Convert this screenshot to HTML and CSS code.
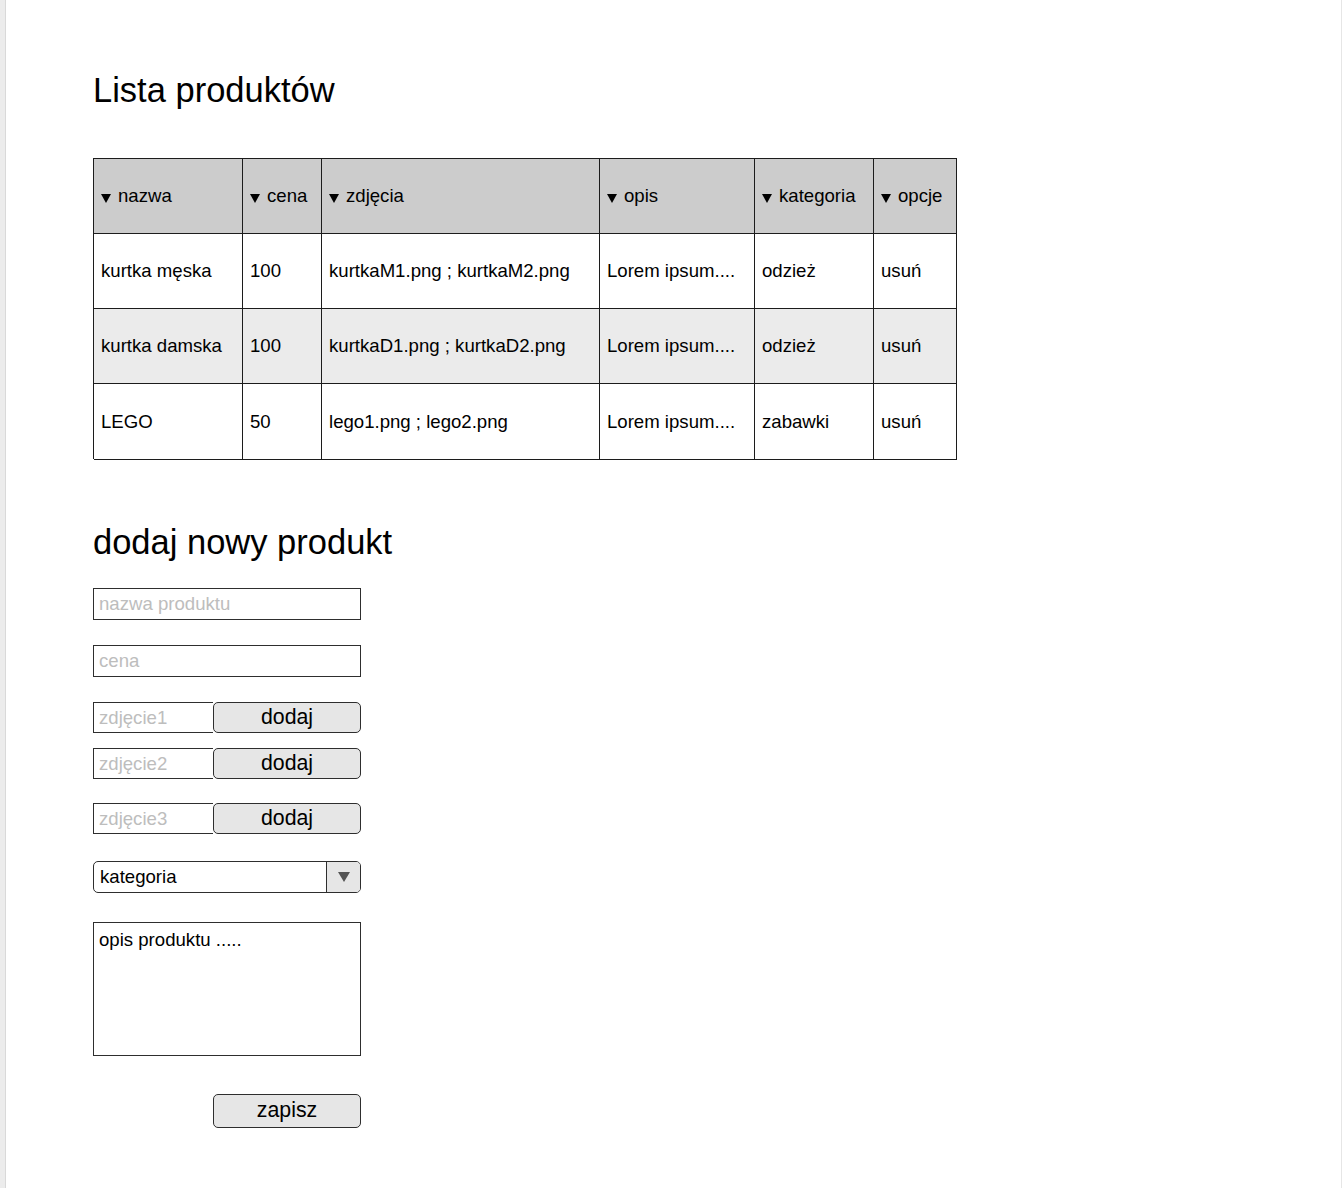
FILE: index.html
```html
<!DOCTYPE html>
<html lang="pl">
<head>
<meta charset="utf-8">
<title>Lista produktów</title>
<link rel="stylesheet" href="styles.css">
</head>
<body>
<main class="page">
  <h1 class="title">Lista produktów</h1>

  <div class="grid" role="table">
    <div class="cell head"><span class="sort"></span>nazwa</div>
    <div class="cell head"><span class="sort"></span>cena</div>
    <div class="cell head"><span class="sort"></span>zdjęcia</div>
    <div class="cell head"><span class="sort"></span>opis</div>
    <div class="cell head"><span class="sort"></span>kategoria</div>
    <div class="cell head"><span class="sort"></span>opcje</div>

    <div class="cell">kurtka męska</div>
    <div class="cell">100</div>
    <div class="cell">kurtkaM1.png ; kurtkaM2.png</div>
    <div class="cell">Lorem ipsum....</div>
    <div class="cell">odzież</div>
    <div class="cell">usuń</div>

    <div class="cell alt">kurtka damska</div>
    <div class="cell alt">100</div>
    <div class="cell alt">kurtkaD1.png ; kurtkaD2.png</div>
    <div class="cell alt">Lorem ipsum....</div>
    <div class="cell alt">odzież</div>
    <div class="cell alt">usuń</div>

    <div class="cell last">LEGO</div>
    <div class="cell last">50</div>
    <div class="cell last">lego1.png ; lego2.png</div>
    <div class="cell last">Lorem ipsum....</div>
    <div class="cell last">zabawki</div>
    <div class="cell last">usuń</div>
  </div>

  <h2 class="title title-form">dodaj nowy produkt</h2>

  <form class="form">
    <input class="field" type="text" placeholder="nazwa produktu">
    <input class="field gap-25" type="text" placeholder="cena">
    <div class="photo gap-25">
      <input class="photo-input" type="text" placeholder="zdjęcie1">
      <button class="btn photo-btn" type="button">dodaj</button>
    </div>
    <div class="photo gap-15">
      <input class="photo-input" type="text" placeholder="zdjęcie2">
      <button class="btn photo-btn" type="button">dodaj</button>
    </div>
    <div class="photo gap-24">
      <input class="photo-input" type="text" placeholder="zdjęcie3">
      <button class="btn photo-btn" type="button">dodaj</button>
    </div>
    <div class="select gap-27">
      <span class="select-text">kategoria</span>
      <span class="select-arrow"><span class="select-tri"></span></span>
    </div>
    <textarea class="desc gap-29">opis produktu .....</textarea>
    <button class="btn save" type="button">zapisz</button>
  </form>
</main>
</body>
</html>
```

FILE: styles.css
```css
html {
  background: #ececec;
  margin: 0;
  padding: 0;
}

body {
  margin: 0 0 0 5px;
  border-left: 1px solid #d9d9d9;
  border-right: 1px solid #e6e6e6;
  background: #ffffff;
  min-height: 1188px;
  font-family: "Liberation Sans", Arial, sans-serif;
  color: #000;
}

.page {
  padding: 70px 0 0 87px;
}

.title {
  margin: 0;
  font-size: 34.5px;
  line-height: 40px;
  font-weight: normal;
}

.grid {
  margin-top: 48px;
  display: grid;
  grid-template-columns: 149px 79px 278px 155px 119px 83px;
  grid-auto-rows: 75px;
  width: max-content;
  border-left: 1px solid #1c1c1c;
  border-top: 1px solid #1c1c1c;
}

.cell {
  box-sizing: border-box;
  border-right: 1px solid #1c1c1c;
  border-bottom: 1px solid #1c1c1c;
  padding-left: 7px;
  display: flex;
  align-items: center;
  font-size: 18.6px;
  white-space: nowrap;
  background: #fff;
}

.cell.head {
  background: #cccccc;
}

.cell.alt {
  background: #ebebeb;
}

.cell.last {
  height: 76px;
  padding-top: 0;
}

.sort {
  display: inline-block;
  width: 0;
  height: 0;
  border-left: 5px solid transparent;
  border-right: 5px solid transparent;
  border-top: 9px solid #000;
  margin-right: 7px;
  position: relative;
  top: 2px;
}

.title-form {
  margin-top: 63px;
}

.form {
  margin-top: 26px;
  display: flex;
  flex-direction: column;
  width: 268px;
}

.gap-15 { margin-top: 15px; }
.gap-24 { margin-top: 24px; }
.gap-25 { margin-top: 25px; }
.gap-27 { margin-top: 27px; }
.gap-29 { margin-top: 29px; }

.field {
  box-sizing: border-box;
  width: 268px;
  height: 32px;
  border: 1px solid #2e2e2e;
  border-radius: 0;
  padding: 0 5px;
  margin: 0;
  font-family: "Liberation Sans", Arial, sans-serif;
  font-size: 18.6px;
  color: #000;
  background: #fff;
  outline: none;
}

.field.gap-25 { margin-top: 25px; }

::placeholder {
  color: #bdbdbd;
  opacity: 1;
}

.photo {
  display: flex;
  height: 31px;
}

.photo-input {
  box-sizing: border-box;
  width: 120px;
  height: 31px;
  border: 1px solid #2e2e2e;
  border-right: none;
  border-radius: 0;
  padding: 0 5px;
  margin: 0;
  font-family: "Liberation Sans", Arial, sans-serif;
  font-size: 18.6px;
  background: #fff;
  outline: none;
}

.btn {
  box-sizing: border-box;
  border: 1px solid #2e2e2e;
  border-radius: 5px;
  background: #e6e6e6;
  font-family: "Liberation Sans", Arial, sans-serif;
  font-size: 21.3px;
  color: #000;
  padding: 0;
  margin: 0;
  line-height: 1;
}

.photo-btn {
  width: 148px;
  height: 31px;
}

.select {
  box-sizing: border-box;
  display: flex;
  height: 32px;
  border: 1px solid #2e2e2e;
  border-radius: 5px;
  overflow: hidden;
  background: #fff;
}

.select-text {
  flex: 1;
  display: flex;
  align-items: center;
  padding-left: 6px;
  font-size: 18.6px;
}

.select-arrow {
  width: 33px;
  border-left: 1px solid #2e2e2e;
  background: #e6e6e6;
  display: flex;
  align-items: center;
  justify-content: center;
}

.select-tri {
  width: 0;
  height: 0;
  border-left: 6px solid transparent;
  border-right: 6px solid transparent;
  border-top: 10px solid #555;
}

.desc {
  box-sizing: border-box;
  width: 268px;
  height: 134px;
  border: 1px solid #2e2e2e;
  border-radius: 0;
  padding: 6px 5px 5px;
  font-family: "Liberation Sans", Arial, sans-serif;
  font-size: 18.6px;
  color: #000;
  resize: none;
  outline: none;
  background: #fff;
}

.save {
  margin-top: 38px;
  margin-left: 120px;
  width: 148px;
  height: 34px;
}
```
